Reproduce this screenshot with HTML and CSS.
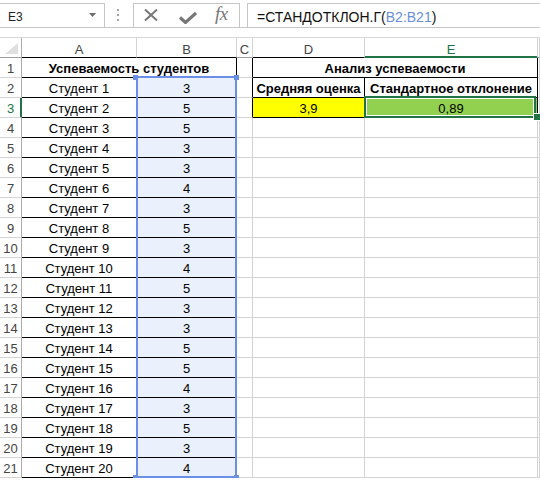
FILE: index.html
```html
<!DOCTYPE html>
<html lang="ru">
<head>
<meta charset="utf-8">
<title>СТАНДОТКЛОН.Г</title>
<link rel="stylesheet" href="styles.css">
</head>
<body>
<div class="toolbar">
  <div class="namebox">
    <span class="ref">E3</span>
    <svg class="dd" width="7" height="4" viewBox="0 0 7 4"><path d="M0 0H7L3.5 4Z" fill="#6d6d6d"/></svg>
  </div>
  <div class="grip">
    <svg width="2" height="12" viewBox="0 0 2 12"><rect x="0" y="0" width="2" height="2" fill="#a6a6a6"/><rect x="0" y="5" width="2" height="2" fill="#a6a6a6"/><rect x="0" y="10" width="2" height="2" fill="#a6a6a6"/></svg>
  </div>
  <div class="fxbox">
    <svg class="ic-x" width="14" height="12" viewBox="0 0 14 12"><path d="M1 0.5L13 11.5M13 0.5L1 11.5" stroke="#777" stroke-width="2" fill="none"/></svg>
    <svg class="ic-ok" width="18" height="12" viewBox="0 0 18 12"><path d="M1 5.5L6.5 10.5L17 1" stroke="#777" stroke-width="3.2" fill="none"/></svg>
    <span class="fx">fx</span>
  </div>
  <div class="formula">=СТАНДОТКЛОН.Г(<span class="rng">B2:B21</span>)</div>
</div>

<div class="sheet">
  <div class="c corner"><svg width="14" height="11" viewBox="0 0 14 11"><path d="M13 0V11H0Z" fill="#dfdfdf"/></svg></div>
  <div class="c h hk">A</div>
  <div class="c h hk">B</div>
  <div class="c h">C</div>
  <div class="c h hk">D</div>
  <div class="c h hsel">E</div>
  <div class="c h"></div>

  <div class="c rh">1</div>
  <div class="c k bold span2">Успеваемость студентов</div>
  <div class="c kr"></div>
  <div class="c k bold span2">Анализ успеваемости</div>
  <div class="c"></div>

  <div class="c rh">2</div>
  <div class="c k">Студент 1</div>
  <div class="c k tint">3</div>
  <div class="c kr"></div>
  <div class="c k bold">Средняя оценка</div>
  <div class="c k bold">Стандартное отклонение</div>
  <div class="c"></div>

  <div class="c rh rsel">3</div>
  <div class="c k">Студент 2</div>
  <div class="c k tint">5</div>
  <div class="c kr"></div>
  <div class="c k yel">3,9</div>
  <div class="c k grn">0,89</div>
  <div class="c"></div>

  <div class="c rh">4</div><div class="c k">Студент 3</div><div class="c k tint">5</div><div class="c"></div><div class="c"></div><div class="c"></div><div class="c"></div>
  <div class="c rh">5</div><div class="c k">Студент 4</div><div class="c k tint">3</div><div class="c"></div><div class="c"></div><div class="c"></div><div class="c"></div>
  <div class="c rh">6</div><div class="c k">Студент 5</div><div class="c k tint">3</div><div class="c"></div><div class="c"></div><div class="c"></div><div class="c"></div>
  <div class="c rh">7</div><div class="c k">Студент 6</div><div class="c k tint">4</div><div class="c"></div><div class="c"></div><div class="c"></div><div class="c"></div>
  <div class="c rh">8</div><div class="c k">Студент 7</div><div class="c k tint">3</div><div class="c"></div><div class="c"></div><div class="c"></div><div class="c"></div>
  <div class="c rh">9</div><div class="c k">Студент 8</div><div class="c k tint">5</div><div class="c"></div><div class="c"></div><div class="c"></div><div class="c"></div>
  <div class="c rh">10</div><div class="c k">Студент 9</div><div class="c k tint">3</div><div class="c"></div><div class="c"></div><div class="c"></div><div class="c"></div>
  <div class="c rh">11</div><div class="c k">Студент 10</div><div class="c k tint">4</div><div class="c"></div><div class="c"></div><div class="c"></div><div class="c"></div>
  <div class="c rh">12</div><div class="c k">Студент 11</div><div class="c k tint">5</div><div class="c"></div><div class="c"></div><div class="c"></div><div class="c"></div>
  <div class="c rh">13</div><div class="c k">Студент 12</div><div class="c k tint">3</div><div class="c"></div><div class="c"></div><div class="c"></div><div class="c"></div>
  <div class="c rh">14</div><div class="c k">Студент 13</div><div class="c k tint">3</div><div class="c"></div><div class="c"></div><div class="c"></div><div class="c"></div>
  <div class="c rh">15</div><div class="c k">Студент 14</div><div class="c k tint">5</div><div class="c"></div><div class="c"></div><div class="c"></div><div class="c"></div>
  <div class="c rh">16</div><div class="c k">Студент 15</div><div class="c k tint">5</div><div class="c"></div><div class="c"></div><div class="c"></div><div class="c"></div>
  <div class="c rh">17</div><div class="c k">Студент 16</div><div class="c k tint">4</div><div class="c"></div><div class="c"></div><div class="c"></div><div class="c"></div>
  <div class="c rh">18</div><div class="c k">Студент 17</div><div class="c k tint">3</div><div class="c"></div><div class="c"></div><div class="c"></div><div class="c"></div>
  <div class="c rh">19</div><div class="c k">Студент 18</div><div class="c k tint">5</div><div class="c"></div><div class="c"></div><div class="c"></div><div class="c"></div>
  <div class="c rh">20</div><div class="c k">Студент 19</div><div class="c k tint">3</div><div class="c"></div><div class="c"></div><div class="c"></div><div class="c"></div>
  <div class="c rh">21</div><div class="c k">Студент 20</div><div class="c k tint">4</div><div class="c"></div><div class="c"></div><div class="c"></div><div class="c"></div>

  <div class="range"></div>
  <div class="hd hd-tl"></div>
  <div class="hd hd-tr"></div>
  <div class="hd hd-bl"></div>
  <div class="hd hd-br"></div>
  <div class="active"></div>
  <div class="fill-handle"></div>
</div>
</body>
</html>
```

FILE: styles.css
```css
* { box-sizing: border-box; }

body {
  margin: 0;
  background: #ffffff;
  font-family: "Liberation Sans", Arial, sans-serif;
  color: #000;
  overflow: hidden;
}

/* ---------- formula bar ---------- */
.toolbar {
  display: flex;
  height: 28px;
  padding-top: 3px;
  border-bottom: 1px solid #c6c6c6;
}

.namebox {
  width: 105px;
  height: 24px;
  border-top: 1px solid #c6c6c6;
  border-right: 1px solid #c6c6c6;
  display: flex;
  align-items: flex-start;
}

.ref {
  flex: 1;
  padding: 3px 0 0 8px;
  font-size: 12px;
  line-height: 20px;
  color: #222;
}

.dd { margin: 9px 8px 0 0; }

.grip {
  width: 28px;
  padding: 6px 0 0 12px;
}
.grip svg { display: block; }

.fxbox {
  width: 107px;
  height: 24px;
  border: 1px solid #c6c6c6;
  border-bottom: none;
  display: flex;
  align-items: flex-start;
}

.ic-x { margin: 5px 0 0 10px; }
.ic-ok { margin: 8px 0 0 21px; }

.fx {
  margin-left: 18px;
  font-family: "Liberation Serif", "Times New Roman", serif;
  font-style: italic;
  font-size: 19px;
  line-height: 20px;
  color: #777;
  letter-spacing: -0.5px;
}

.formula {
  flex: 1;
  margin-left: 7px;
  height: 24px;
  border-top: 1px solid #c6c6c6;
  border-left: 1px solid #c6c6c6;
  padding: 3px 0 0 9px;
  font-size: 14px;
  line-height: 20px;
  color: #111;
  white-space: nowrap;
}

.rng { color: #6a8ed8; }

/* ---------- sheet grid ---------- */
.sheet {
  position: relative;
  margin-top: 9px;
  border-top: 1px solid #d9d9d9;
  display: grid;
  grid-template-columns: 22px 115px 100px 16px 112px 173px 1fr;
  grid-auto-rows: 20px;
}

.c {
  border-right: 1px solid #d4d4d4;
  border-bottom: 1px solid #d4d4d4;
  font-size: 13px;
  line-height: 19px;
  padding-top: 1px;
  text-align: center;
  white-space: nowrap;
  overflow: hidden;
}

.corner {
  border-right-color: #ababab;
  border-bottom-color: #9e9e9e;
  padding: 5px 0 0 5px;
}
.corner svg { display: block; }

.h {
  color: #444;
  padding-top: 2px;
  border-bottom-color: #9e9e9e;
}
.hk { border-bottom-color: #000; }
.hsel {
  color: #217346;
  border-bottom-color: #217346;
  box-shadow: inset 0 -1px 0 #217346;
}

.rh {
  color: #444;
  border-right-color: #ababab;
}
.rsel {
  color: #217346;
  border-right-color: #217346;
  box-shadow: inset -1px 0 0 #217346;
}

.k {
  border-right-color: #000;
  border-bottom-color: #000;
}
.kr { border-right-color: #000; }

.span2 { grid-column: span 2; }
.bold { font-weight: bold; }

.tint { background: #eaf0fc; }
.yel { background: #ffff00; }
.grn { background: #92d050; }

/* ---------- overlays ---------- */
.range {
  position: absolute;
  left: 136px;
  top: 38px;
  width: 101px;
  height: 402px;
  border: 2px solid #6b8fe6;
}

.hd {
  position: absolute;
  width: 5px;
  height: 5px;
  background: #6b8fe6;
}
.hd-tl { left: 133px; top: 37px; }
.hd-tr { left: 234px; top: 37px; }
.hd-bl { left: 133px; top: 437px; }
.hd-br { left: 234px; top: 437px; }

.active {
  position: absolute;
  left: 364px;
  top: 58px;
  width: 172px;
  height: 22px;
  border: 2px solid #217346;
  box-shadow: inset 0 0 0 1px #ffffff;
}

.fill-handle {
  position: absolute;
  left: 533px;
  top: 75px;
  width: 8px;
  height: 8px;
  border: 1px solid #ffffff;
  background: #217346;
}
```
